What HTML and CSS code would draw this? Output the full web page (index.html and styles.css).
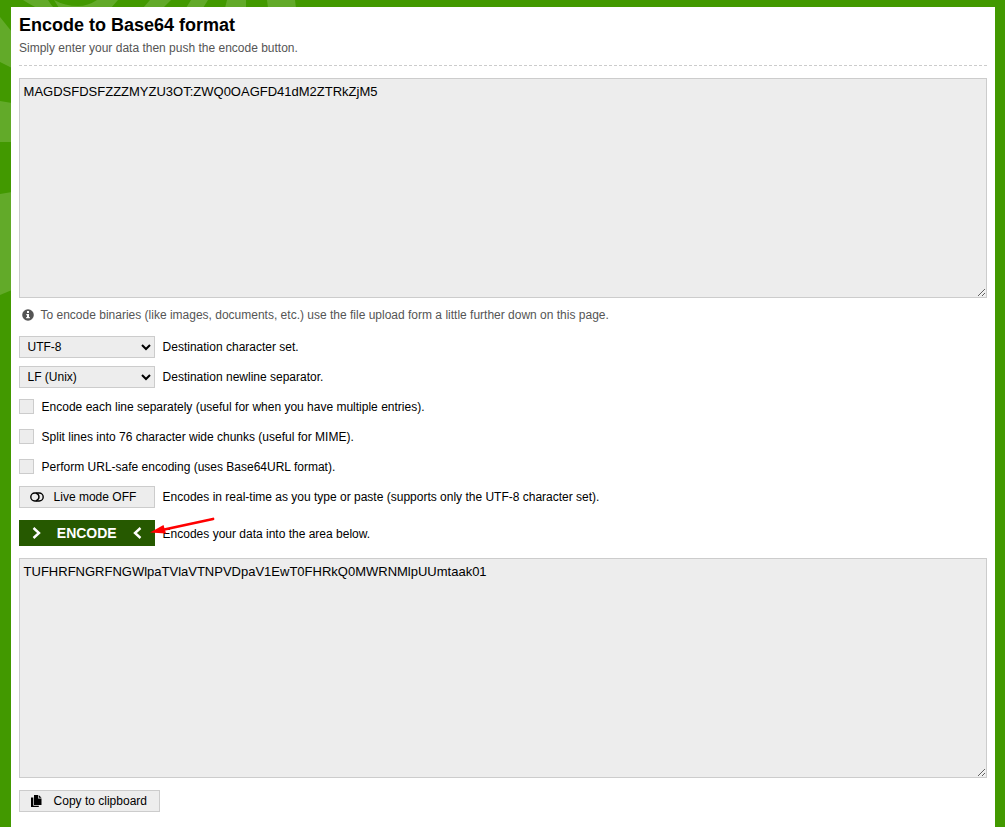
FILE: index.html
```
<!DOCTYPE html>
<html lang="en">
<head>
<meta charset="utf-8">
<title>Encode to Base64 format</title>
<link rel="stylesheet" href="styles.css">
</head>
<body>
<svg class="backdrop" width="330" height="300" viewBox="0 0 330 300" aria-hidden="true">
  <path d="M23 0H48Q51 5 54 8H37Q29 4 23 0Z"/>
  <path d="M54 0Q65 6 78 6Q88 6 97 0H118L111 8H59Z"/>
  <path d="M150 0H171L163 8H143Z"/>
  <path d="M191 0H208L203 8H186Z"/>
  <path d="M227 0H246V8H225Z"/>
  <path d="M267 0H295L296 8H268Z"/>
  <path d="M0 17L12 32V68L0 62Z"/>
  <path d="M0 101L12 103V142H0Z"/>
  <path d="M0 194L12 192V290L0 295Z"/>
</svg>
<main class="panel">
  <header class="heading">
    <h1>Encode to Base64 format</h1>
    <p>Simply enter your data then push the encode button.</p>
  </header>
  <textarea class="area" spellcheck="false">MAGDSFDSFZZZMYZU3OT:ZWQ0OAGFD41dM2ZTRkZjM5</textarea>
  <p class="hint">
    <svg width="12" height="12" viewBox="0 0 12 12"><circle cx="6" cy="6" r="5.8" fill="#555"/><path d="M5 2h2v2H5zM4.3 5H7v3h.8v1.3H4.2V8H5V6.3h-.7z" fill="#fff"/></svg>
    <span>To encode binaries (like images, documents, etc.) use the file upload form a little further down on this page.</span>
  </p>
  <div class="row"><select class="control"><option>UTF-8</option></select><span>Destination character set.</span></div>
  <div class="row"><select class="control"><option>LF (Unix)</option></select><span>Destination newline separator.</span></div>
  <label class="row"><input type="checkbox" class="check"><span>Encode each line separately (useful for when you have multiple entries).</span></label>
  <label class="row"><input type="checkbox" class="check"><span>Split lines into 76 character wide chunks (useful for MIME).</span></label>
  <label class="row"><input type="checkbox" class="check"><span>Perform URL-safe encoding (uses Base64URL format).</span></label>
  <div class="row">
    <button class="control live"><svg width="14" height="10" viewBox="0 0 14 10" fill="none" stroke="#000" stroke-width="1.4"><rect x=".8" y="1" width="12.4" height="8" rx="4"/><path d="M6 1.200Q9 2.500 9 5T6 8.800"/></svg><span>Live mode OFF</span></button>
    <span>Encodes in real-time as you type or paste (supports only the UTF-8 character set).</span>
  </div>
  <div class="row submit">
    <button class="encode"><svg width="10" height="12" viewBox="0 0 10 12"><path d="M1.5 1L7 6l-5.500 5"/></svg><span>ENCODE</span><svg width="10" height="12" viewBox="0 0 10 12"><path d="M8.500 1L3 6l5.500 5"/></svg></button>
    <span class="note">Encodes your data into the area below.</span>
    <svg class="arrow" width="66" height="22" viewBox="0 0 66 22"><path d="M63 3L12 14" stroke="#f00" stroke-width="2.800" stroke-linecap="round"/><path d="M0 16.500L13.500 9L16 17.500Z" fill="#f00"/></svg>
  </div>
  <textarea class="area output" spellcheck="false">TUFHRFNGRFNGWlpaTVlaVTNPVDpaV1EwT0FHRkQ0MWRNMlpUUmtaak01</textarea>
  <button class="control copy"><svg width="12" height="12" viewBox="0 0 12 12"><path d="M4 0h4v3.500h3.500V10H4z"/><path d="M8.700 0L11.500 2.800H8.700z"/><path d="M1 2.500h2.300v8.200h5.500V12H1z"/></svg><span>Copy to clipboard</span></button>
</main>
</body>
</html>
```

FILE: styles.css
```
* { box-sizing: border-box; }
body {
  margin: 0;
  height: 827px;
  overflow: hidden;
  padding: 7px 10px 0 11px;
  background: #429900;
  font: 12px/16px "Liberation Sans", Arial, sans-serif;
  color: #000;
}
.backdrop { position: absolute; left: 0; top: 0; fill: #62aa29; }
.panel {
  position: relative;
  height: 820px;
  padding: 8px 8px 0;
  background: #fff;
}
.heading { height: 51px; border-bottom: 1px dashed #ccc; }
h1 { margin: 0; font-size: 18px; line-height: 20px; }
.heading p { margin: 5px 0 0; color: #555; }
button, select, textarea { font-family: inherit; color: #000; border-radius: 0; }
.area {
  display: block;
  width: 968px;
  height: 220px;
  margin: 12px 0 0;
  padding: 5px 4px 4px 3.6px;
  border: 1px solid #ccc;
  background: #ededed;
  font-size: 13px;
  line-height: 16px;
  outline: none;
}
.hint {
  display: flex;
  align-items: center;
  gap: 7px;
  height: 16px;
  margin: 9px 0 13px;
  padding-left: 2.5px;
  color: #555;
}
.row { display: flex; align-items: center; gap: 7.6px; height: 22px; margin-bottom: 8px; }
.control {
  width: 136px;
  height: 22px;
  padding: 0 4px 0 3.5px;
  border: 1px solid #ccc;
  background: #ededed;
  font-size: 12px;
}
.check {
  appearance: none;
  width: 15px;
  height: 15px;
  margin: 0 0 1px;
  border: 1px solid #ccc;
  background: #ededed;
}
.live, .copy { display: flex; align-items: center; gap: 10px; padding-left: 9.6px; }
.submit { position: relative; height: 26px; margin: 12px 0 0; }
.note { padding-top: 1px; }
.encode {
  display: flex;
  align-items: center;
  justify-content: space-between;
  width: 136px;
  height: 26px;
  padding: 0 13px 0 12.5px;
  border: 0;
  background: #265900;
  color: #fff;
  font-size: 14px;
  font-weight: bold;
}
.encode path { fill: none; stroke: #fff; stroke-width: 2.4; }
.arrow { position: absolute; left: 131px; top: -4px; }
.copy { width: 141px; margin-top: 12px; gap: 12px; }
```
